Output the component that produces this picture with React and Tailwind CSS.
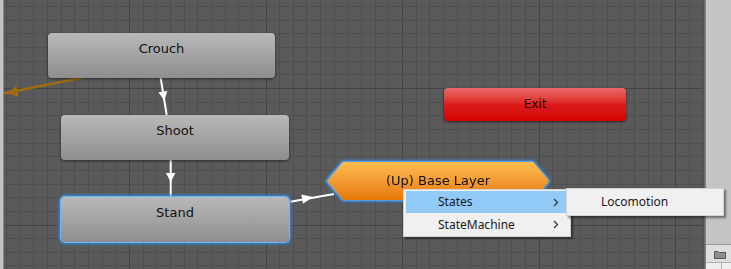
import React from "react";

const vLines = Array.from({ length: 52 }, (_, i) => ({
  x: Math.round(2.15 + i * 13.65) + 0.5,
  major: i % 10 === 9,
}));
const hLines = Array.from({ length: 20 }, (_, j) => ({
  y: Math.round(6.1 + j * 13.65) + 0.5,
  major: j % 10 === 6,
}));

function GrayNode({ left, top, w, label, selected }) {
  return (
    <div
      className={
        "absolute h-[45px] rounded-[4px] bg-linear-to-b from-[#b9b9b9] to-[#8e8e8e] text-center text-[13px] leading-4 pt-[8px] text-[#111111] " +
        (selected
          ? "shadow-[0_0_0_1px_#6fb6f6,0_0_3px_2px_#2c8ae6]"
          : "shadow-[0_1px_3px_rgba(0,0,0,0.55)]")
      }
      style={{ left, top, width: w, fontFamily: '"DejaVu Sans", sans-serif' }}
    >
      {label}
    </div>
  );
}

function Chevron() {
  return (
    <svg width="6" height="9" viewBox="0 0 6 9" className="block">
      <path d="M1 1 L4.5 4.5 L1 8" fill="none" stroke="#333" strokeWidth="1.2" />
    </svg>
  );
}

export default function App() {
  return (
    <div className="relative w-[731px] h-[269px] overflow-hidden flex bg-[#c2c2c2]">
      {/* left strip */}
      <div className="w-[4px] h-full bg-[#c3c3c3] border-r border-[#8a8a8a]" />
      {/* canvas */}
      <div className="relative w-[699px] h-full bg-[#5a5a5a] overflow-hidden">
        <svg className="absolute inset-0" width="699" height="269">
          {vLines.map((l, i) => (
            <line
              key={"v" + i}
              x1={l.x}
              x2={l.x}
              y1="0"
              y2="269"
              stroke={l.major ? "#444444" : "#4f4f4f"}
              strokeWidth="1"
            />
          ))}
          {hLines.map((l, i) => (
            <line
              key={"h" + i}
              y1={l.y}
              y2={l.y}
              x1="0"
              x2="699"
              stroke={l.major ? "#444444" : "#4f4f4f"}
              strokeWidth="1"
            />
          ))}
          {/* orange transition */}
          <line x1="-4" y1="94" x2="78" y2="77.7" stroke="#a06c10" strokeWidth="2.5" />
          <polygon points="2.5,93.2 14.5,96.5 12.4,85.8" fill="#a06c10" />
          {/* crouch -> shoot */}
          <line x1="156.7" y1="78" x2="162.7" y2="115" stroke="#ffffff" strokeWidth="2" />
          <polygon points="160.3,100.5 163.3,90.9 154.5,92.3" fill="#ffffff" />
          {/* shoot -> stand */}
          <line x1="166.7" y1="160" x2="166.7" y2="197" stroke="#ffffff" strokeWidth="2" />
          <polygon points="166.7,182 162,173 171.4,173" fill="#ffffff" />
          {/* stand -> base */}
          <line x1="285" y1="202" x2="330" y2="194" stroke="#ffffff" strokeWidth="2" />
          <polygon points="309,197 297.3,194.6 299,203.8" fill="#ffffff" />
        </svg>

        <GrayNode left={44} top={33} w={227} label="Crouch" />
        <GrayNode left={57} top={115} w={228} label="Shoot" />
        <GrayNode left={57} top={197} w={228} label="Stand" selected />

        {/* Exit */}
        <div
          className="absolute left-[440px] top-[88px] w-[182px] h-[33px] rounded-[4px] bg-linear-to-b from-[#e96868] via-[#dc1a1a] to-[#d60000] text-center text-[12px] leading-4 pt-[8px] text-[#1a0000] shadow-[0_1px_3px_rgba(0,0,0,0.55)]"
          style={{ fontFamily: '"DejaVu Sans", sans-serif' }}
        >
          Exit
        </div>

        {/* Base layer hexagon */}
        <div className="absolute left-[323px] top-[162px] w-[222px] h-[38px] [filter:drop-shadow(0_0_1px_#8cc8ff)_drop-shadow(0_0_1.5px_#3a96f0)_drop-shadow(0_0_1.5px_#2a86e6)]">
          <div
            className="w-full h-full flex items-center justify-center bg-linear-to-b from-[#fdbd50] to-[#e67800] text-[13px] text-[#111111] [clip-path:polygon(16px_0,206px_0,222px_50%,206px_100%,16px_100%,0_50%)]"
            style={{ fontFamily: '"DejaVu Sans", sans-serif' }}
          >
            (Up) Base Layer
          </div>
        </div>
      </div>

      {/* right border */}
      <div className="w-[3px] h-full bg-linear-to-r from-[#4a4a4a] to-[#8c8c8c]" />
      {/* right panel */}
      <div className="flex-1 h-full flex flex-col">
        <div className="h-[245px] bg-[#c4c4c4] border-b border-[#9a9a9a]" />
        <div className="h-[18px] bg-[#dedede] border-b border-[#b0b0b0] pl-[8px] pt-[5px]">
          <svg width="12" height="9" viewBox="0 0 12 9" className="block">
            <path d="M0.5 8.5 V1.5 H4 L5 2.5 H11.5 V8.5 Z" fill="#8e8e8e" stroke="#555" strokeWidth="1" />
          </svg>
        </div>
        <div className="flex-1 flex bg-[#eeeeee]">
          <div className="w-[16px] border-r border-[#b0b0b0]" />
        </div>
      </div>

      {/* Context menu */}
      <div
        className="absolute left-[403px] top-[189px] w-[168px] h-[48px] bg-[#f0f0f0] border border-[#d2d2d2] shadow-[2px_2px_2px_rgba(0,0,0,0.45)] p-[1px] text-[12px] text-[#1a1a1a]"
        style={{ fontFamily: '"Noto Sans", "Noto Sans CJK SC", sans-serif' }}
      >
        <div className="h-[22px] bg-[#91c9f7] flex items-center pl-[32px] pr-[10px] ml-[1px]">
          <span className="flex-1 leading-none">States</span>
          <Chevron />
        </div>
        <div className="h-[23px] flex items-center pl-[33px] pr-[10px]">
          <span className="flex-1 leading-none">StateMachine</span>
          <Chevron />
        </div>
      </div>

      {/* Submenu */}
      <div
        className="absolute left-[566px] top-[188px] w-[158px] h-[28px] bg-[#f0f0f0] border border-[#d2d2d2] shadow-[2px_2px_2px_rgba(0,0,0,0.45)] flex items-center pl-[34px] text-[12px] text-[#1a1a1a]"
        style={{ fontFamily: '"Noto Sans", "Noto Sans CJK SC", sans-serif' }}
      >
        Locomotion
      </div>
    </div>
  );
}
